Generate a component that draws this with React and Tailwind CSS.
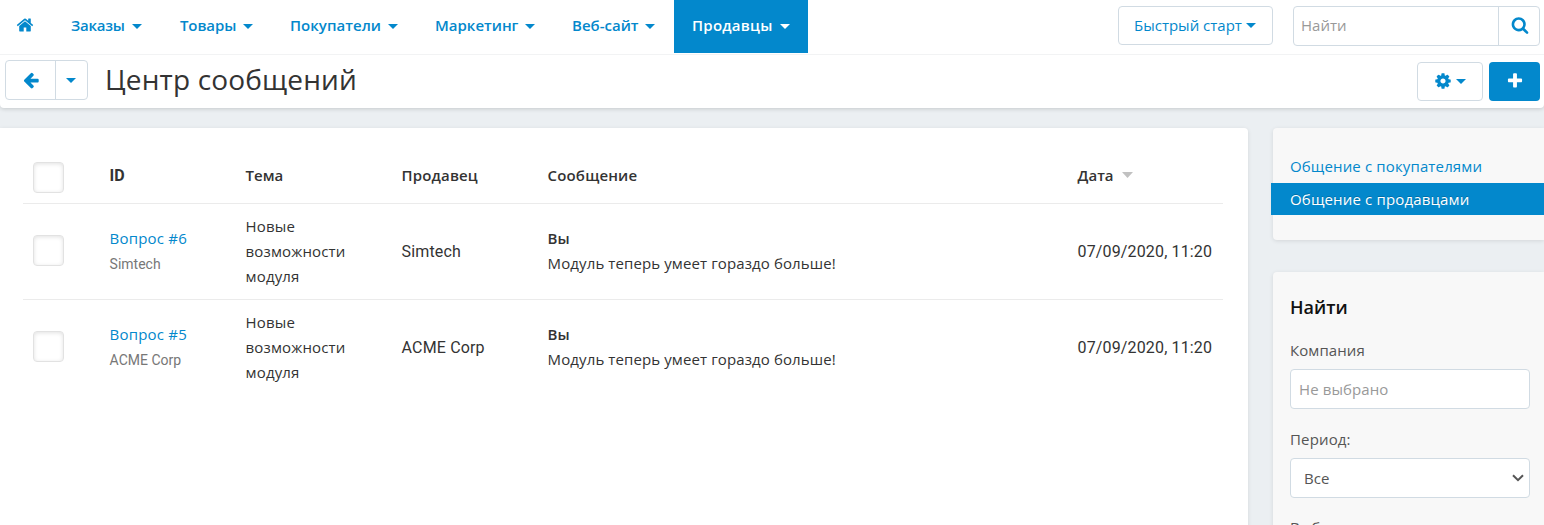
const PATHS = {
  home: 'M1472 992v480q0 26-19 45t-45 19h-384v-384h-256v384h-384q-26 0-45-19t-19-45v-480q0-1 .5-3t.5-3l575-474 575 474q1 2 1 6zm223-69l-62 74q-8 9-21 11h-3q-13 0-21-7l-692-577-692 577q-12 8-24 7-13-2-21-11l-62-74q-8-10-7-23.5t11-21.5l719-599q32-26 76-26t76 26l244 204v-195q0-14 9-23t23-9h192q14 0 23 9t9 23v408l219 182q10 8 11 21.5t-7 23.5z',
  back: 'M1664 896v128q0 53-32.5 90.5t-84.5 37.5h-704l293 294q38 36 38 90t-38 90l-75 76q-37 37-90 37-52 0-91-37l-651-652q-37-37-37-90 0-52 37-91l651-650q38-38 91-38 52 0 90 38l75 74q38 38 38 91t-38 91l-293 293h704q52 0 84.5 37.5t32.5 90.5z',
  cog: 'M1152 896q0-106-75-181t-181-75-181 75-75 181 75 181 181 75 181-75 75-181zm512-109v222q0 12-8 23t-20 13l-185 28q-19 54-39 91 35 50 107 138 10 12 10 25t-9 23q-27 37-99 108t-94 71q-12 0-26-9l-138-108q-44 23-91 38-16 136-29 186-7 28-36 28h-222q-14 0-24.5-8.5t-11.5-21.5l-28-184q-49-16-90-37l-141 107q-10 9-25 9-14 0-25-11-126-114-165-168-7-10-7-23 0-12 8-23 15-21 51-66.5t54-70.5q-27-50-41-99l-183-27q-13-2-21-12.5t-8-23.5v-222q0-12 8-23t19-13l186-28q14-46 39-92-40-57-107-138-10-12-10-24 0-10 9-23 26-36 98.5-107.5t94.5-71.5q13 0 26 10l138 107q44-23 91-38 16-136 29-186 7-28 36-28h222q14 0 24.5 8.5t11.5 21.5l28 184q49 16 90 37l142-107q9-9 24-9 13 0 25 10 129 119 165 170 7 8 7 22 0 12-8 23-15 21-51 66.5t-54 70.5q26 50 41 98l183 28q13 2 21 12.5t8 23.5z',
  search: 'M1216 832q0-185-131.5-316.5t-316.5-131.5-316.5 131.5-131.5 316.5 131.5 316.5 316.5 131.5 316.5-131.5 131.5-316.5zm512 832q0 52-38 90t-90 38q-54 0-90-38l-343-342q-179 124-399 124-143 0-273.500-55.500t-225-150-150-225-55.500-273.500 55.500-273.500 150-225 225-150 273.500-55.500 273.500 55.500 225 150 150 225 55.500 273.500q0 220-124 399l343 343q37 37 37 90z',
  plus: 'M1600 736v192q0 40-28 68t-68 28h-416v416q0 40-28 68t-68 28h-192q-40 0-68-28t-28-68v-416h-416q-40 0-68-28t-28-68v-192q0-40 28-68t68-28h416v-416q0-40 28-68t68-28h192q40 0 68 28t28 68v416h416q40 0 68 28t28 68z',
};

function Icon({ name, className = '' }) {
  return (
    <svg viewBox="0 0 1792 1792" className={`size-[18px] shrink-0 fill-current ${className}`}>
      <path d={PATHS[name]} />
    </svg>
  );
}

function Caret({ className = '' }) {
  return (
    <svg viewBox="0 0 10 5" className={`h-[5px] w-[10px] shrink-0 fill-current ${className}`}>
      <path d="M0 0h10L5 5z" />
    </svg>
  );
}

const NAV = [
  { label: 'Заказы', box: 'w-[109px] pr-[20px]', text: 'tracking-[-0.25px]' },
  { label: 'Товары', box: 'w-[110px] pr-[19px]', text: 'tracking-[-0.1px]' },
  { label: 'Покупатели', box: 'w-[145px] pr-[19px]', text: 'tracking-[0.04px]' },
  { label: 'Маркетинг', box: 'w-[137px] pr-[19px]', text: 'tracking-[0px]' },
  { label: 'Веб-сайт', box: 'w-[120px] pr-[19px]', text: 'tracking-[0px]' },
  { label: 'Продавцы', box: 'w-[134px] pr-[18px]', text: 'tracking-[0.25px]', active: true },
];

const ROWS = [
  { id: 'Вопрос #6', vendor: 'Simtech' },
  { id: 'Вопрос #5', vendor: 'ACME Corp' },
];

const COLS = 'grid grid-cols-[86.600px_136px_156px_146px_530px_1fr] items-center border-[#ebebeb]';

function Check({ className = '' }) {
  return (
    <span
      className={`ml-[10px] block size-[31px] rounded-[4px] border border-[#e2e2e2] bg-white shadow-[inset_0_1px_4px_rgba(0,0,0,0.12)] ${className}`}
    />
  );
}

function Nav() {
  return (
    <div className="flex h-[55px] items-start border-b border-[#f2f3f4]">
      <div className="flex h-[53px] w-[53px] items-center pb-1 pl-4 text-[#0388cc]">
        <Icon name="home" />
      </div>
      {NAV.map((n) => (
        <div
          key={n.label}
          className={`flex h-[53px] items-center justify-between pl-[18px] text-[15px] font-semibold ${n.box} ${
            n.active ? 'bg-[#0388cc] text-white' : 'text-[#0388cc]'
          }`}
        >
          <span className={`pb-[2px] whitespace-nowrap ${n.text}`}>{n.label}</span>
          <Caret />
        </div>
      ))}
      <div className="mt-[6px] ml-auto flex h-[39px] w-[155px] items-center justify-between rounded-[4px] border border-[#d1dbe3] pr-4 pl-[15px] text-[15px] text-[#0388cc]">
        <span className="whitespace-nowrap">Быстрый старт</span>
        <Caret />
      </div>
      <div className="mt-[6px] mr-[4px] ml-[20px] flex h-10 w-[247px] rounded-[4px] border border-[#d1dbe3]">
        <div className="flex flex-1 items-center pb-[2px] pl-[7px] text-[15px] text-[#999]">Найти</div>
        <div className="flex w-[41px] items-center justify-center border-l border-[#d1dbe3] pb-[2px] pl-px text-[#0388cc]">
          <Icon name="search" />
        </div>
      </div>
    </div>
  );
}

function TitleBar() {
  return (
    <div className="flex h-[53px] items-start">
      <div className="mt-[5px] ml-[5px] flex h-10 w-[83px] rounded-[4px] border border-[#d1dbe3] text-[#0388cc]">
        <div className="flex w-[50px] items-center justify-center border-r border-[#d1dbe3]">
          <Icon name="back" />
        </div>
        <div className="flex flex-1 items-center justify-center pr-px">
          <Caret />
        </div>
      </div>
      <h1 className="ml-[17px] text-[28px] leading-[48px] font-normal tracking-[0.16px] text-[#333]">Центр сообщений</h1>
      <div className="mt-[7px] ml-auto flex h-[39px] w-[66px] items-center justify-center gap-1 rounded-[4px] border border-[#d1dbe3] pb-px text-[#0388cc]">
        <Icon name="cog" />
        <Caret />
      </div>
      <div className="mt-[7px] mr-[4px] ml-[6px] flex h-[39px] w-[51px] items-center justify-center rounded-[4px] bg-[#0388cc] pb-[2px] text-white">
        <Icon name="plus" />
      </div>
    </div>
  );
}

function Messages() {
  return (
    <main className="h-[420px] w-[1248px] rounded-tr-[4px] bg-white pt-6 pr-[25px] pl-[23px] text-[15px] leading-[25px] text-[#333] shadow-[0_1px_4px_rgba(0,0,0,0.1)]">
      <div className={`h-[52px] border-b font-semibold ${COLS}`}>
        <Check />
        <span className="pb-1 font-['Roboto'] text-[16px] font-bold">ID</span>
        <span className="pb-1">Тема</span>
        <span className="pb-1 tracking-[0.15px]">Продавец</span>
        <span className="pb-1 tracking-[0.15px]">Сообщение</span>
        <span className="flex items-center gap-2 pb-1">
          Дата
          <svg viewBox="0 0 11 6" className="mb-[2px] h-[6px] w-[11px] fill-[#c1c1c1]">
            <path d="M0 0h11L5.500 6z" />
          </svg>
        </span>
      </div>
      {ROWS.map((r, i) => (
        <div key={r.id} className={`${COLS} ${i === 0 ? 'h-24 border-b' : 'h-[95px]'}`}>
          <Check className="mb-[2px]" />
          <div>
            <div className="-mt-px mb-px tracking-[0.2px] text-[#0388cc]">{r.id}</div>
            <div className="font-['Roboto'] text-[14px] text-[#777]">{r.vendor}</div>
          </div>
          <div className="w-[110px] tracking-[0.15px]">Новые возможности модуля</div>
          <div className="font-['Roboto'] text-[16px] tracking-[0.15px]">{r.vendor}</div>
          <div className="pb-[2px]">
            <div className="font-semibold">Вы</div>
            <div className="tracking-[0.11px] whitespace-nowrap">Модуль теперь умеет гораздо больше!</div>
          </div>
          <div className="font-['Roboto'] text-[16px] tracking-[0.14px] whitespace-nowrap">07/09/2020, 11:20</div>
        </div>
      ))}
    </main>
  );
}

function Sidebar() {
  return (
    <aside className="flex w-[273px] flex-col text-[15px]">
      <nav className="ml-[2px] h-[112px] rounded-l-[4px] bg-[#f8f8f8] pt-[22px] shadow-[0_1px_4px_rgba(0,0,0,0.1)]">
        <div className="h-[33px] pl-[17px] leading-[32px] tracking-[0.14px] text-[#0388cc]">Общение с покупателями</div>
        <div className="-ml-[2px] h-8 bg-[#0388cc] pl-[19px] leading-[33px] font-medium tracking-[0.16px] text-white [text-shadow:0_-1px_0_rgba(0,0,0,0.2)]">
          Общение с продавцами
        </div>
      </nav>
      <section className="mt-8 ml-[2px] h-[300px] rounded-l-[4px] bg-[#f8f8f8] pt-[23px] pr-[14px] pl-[17px] text-[#555] shadow-[0_1px_4px_rgba(0,0,0,0.1)]">
        <h2 className="text-[18px] leading-[25px] font-semibold text-[#111]">Найти</h2>
        <div className="mt-[18px] h-[31px] leading-[25px] tracking-[0.08px]">Компания</div>
        <div className="flex h-10 items-center rounded-[4px] border border-[#d1dbe3] bg-white pl-2 tracking-[0.1px] text-[#999]">Не выбрано</div>
        <div className="mt-[18px] h-[31px] leading-[25px] tracking-[0.15px]">Период:</div>
        <div className="flex h-10 items-center justify-between rounded-[4px] border border-[#d1dbe3] bg-white pr-[5px] pl-[13px]">
          Все
          <svg viewBox="0 0 12 8" className="h-2 w-3 fill-none stroke-[#555] stroke-2">
            <path d="M1 1.200l5 5 5-5" />
          </svg>
        </div>
        <div className="mt-[17px] leading-[25px]">Выбрать</div>
      </section>
    </aside>
  );
}

export default function App() {
  return (
    <div className="h-[525px] w-[1544px] overflow-hidden bg-[#ebeff2] font-['Open_Sans',sans-serif]">
      <header className="h-[108px] rounded-b-[4px] bg-white shadow-[0_1px_4px_rgba(0,0,0,0.16)]">
        <Nav />
        <TitleBar />
      </header>
      <div className="mt-5 flex justify-between">
        <Messages />
        <Sidebar />
      </div>
    </div>
  );
}
